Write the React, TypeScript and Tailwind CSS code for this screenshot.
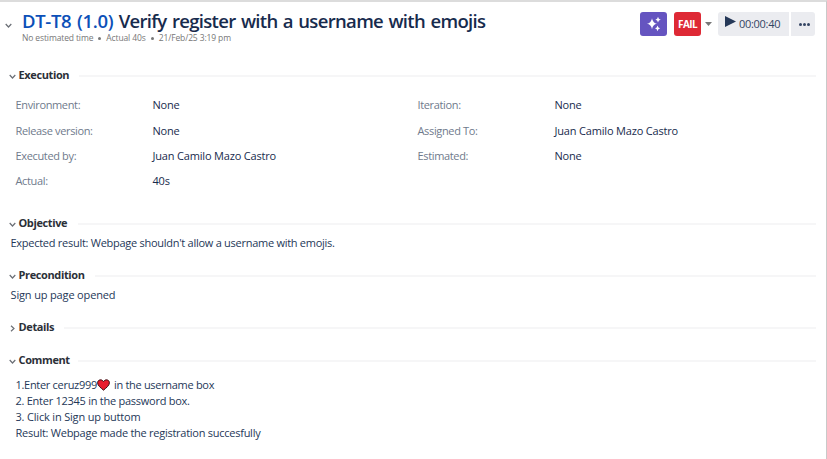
import type { ReactNode } from "react";

function Chevron({ closed = false, className = "" }: { closed?: boolean; className?: string }) {
  return (
    <svg viewBox="0 0 7 7" className={`h-[7px] w-[7px] shrink-0 ${className}`} fill="none" stroke="#6b6f76" strokeWidth="1.2">
      <path d={closed ? "M2 0.7L5 3.5L2 6.3" : "M0.7 2L3.5 5L6.3 2"} />
    </svg>
  );
}

function SectionTitle({ children, width, closed }: { children: ReactNode; width: string; closed?: boolean }) {
  return (
    <div className="flex h-4 items-center">
      <Chevron closed={closed} className="mt-[2px] ml-[8.5px]" />
      <h2 className={`ml-[3px] shrink-0 text-[11px] leading-4 font-bold tracking-[-0.38px] whitespace-nowrap text-[#2b3038] ${width}`}>{children}</h2>
      <div className="mt-[1px] mr-[10px] h-[2px] flex-1 bg-[#f6f6f7]" />
    </div>
  );
}

function Field({ label, value }: { label: string; value: string }) {
  return (
    <div className="flex h-[25.3px] items-center text-[11px]">
      <span className="w-[137px] tracking-[-0.35px] text-[#6f7a8c]">{label}</span>
      <span className="tracking-[-0.18px] text-[#172b4d]">{value}</span>
    </div>
  );
}

export default function App() {
  return (
    <main className="h-[459px] w-[827px] overflow-hidden border-t-2 border-r border-t-[#dcdcdc] border-r-[#c9c9c9] bg-white font-['Open_Sans','Noto_Sans',sans-serif] text-[11px] text-[#253858]">
      <header className="flex h-[65px]">
        <Chevron className="mt-[20px] ml-[5px]" />
        <div className="ml-[10px] flex-1 pt-[8px]">
          <h1 className="text-[18.5px] leading-[22px] font-semibold tracking-[-0.67px] whitespace-nowrap text-[#172b4d] [word-spacing:1.2px]">
            <span className="tracking-[-0.33px] text-[#0c50b8]">DT-T8 (1.0)</span> Verify register with a username with emojis
          </h1>
          <p className="flex items-center text-[8.5px] leading-3 tracking-[-0.12px] whitespace-nowrap text-[#777]">
            No estimated time
            <i className="mx-[5px] h-[3px] w-[3px] rounded-full bg-[#777]" />
            Actual 40s
            <i className="mx-[5px] h-[3px] w-[3px] rounded-full bg-[#777]" />
            21/Feb/25 3:19 pm
          </p>
        </div>
        <div className="mt-[10px] mr-[11px] flex h-6">
          <button className="flex h-6 w-[27px] items-center justify-center rounded-[3px] bg-[#6554c0]">
            <svg viewBox="0 0 16 16" className="h-4 w-4" fill="white">
              <path d="M6 2.3Q6.8 7.2 11 7.8Q6.8 8.5 6 13.2Q5.2 8.5 1 7.8Q5.2 7.2 6 2.3Z" />
              <path d="M12 0.8Q12.4 3.3 14.7 3.7Q12.4 4 12 6.5Q11.6 4 9.4 3.7Q11.6 3.3 12 0.8Z" />
              <path d="M11.5 9.5Q12 12 14.2 12.3Q12 12.7 11.5 15.2Q11.1 12.7 9 12.3Q11.1 12 11.5 9.5Z" />
            </svg>
          </button>
          <button className="ml-[7px] h-6 w-[27px] rounded-[3px] bg-[#de2935] text-[10px] font-bold tracking-[-0.6px] text-white">FAIL</button>
          <svg viewBox="0 0 7 4" className="mt-[10px] ml-[4px] h-1 w-[7px]" fill="#777">
            <path d="M0 0H7L3.5 4Z" />
          </svg>
          <button className="ml-[6px] flex h-6 w-[71px] items-center rounded-l-[3px] bg-[#ebecf0] text-[11px] text-[#344563]">
            <svg viewBox="0 0 11 11" className="mb-[5px] ml-[7px] h-[11px] w-[11px]" fill="#253858">
              <path d="M0 0L11 5.5L0 11Z" />
            </svg>
            <span className="ml-[3px] tracking-[-0.3px]">00:00:40</span>
          </button>
          <button className="ml-[2px] flex h-6 w-6 items-center justify-center gap-[1px] rounded-r-[3px] bg-[#ebecf0] pl-[3px]">
            <i className="h-[3px] w-[3px] rounded-full bg-[#344563]" />
            <i className="h-[3px] w-[3px] rounded-full bg-[#344563]" />
            <i className="h-[3px] w-[3px] rounded-full bg-[#344563]" />
          </button>
        </div>
      </header>

      <section className="h-[148px]">
        <SectionTitle width="w-[60px]">Execution</SectionTitle>
        <div className="flex pt-[10px] pl-[15.5px]">
          <div className="w-[402px]">
            <Field label="Environment:" value="None" />
            <Field label="Release version:" value="None" />
            <Field label="Executed by:" value="Juan Camilo Mazo Castro" />
            <Field label="Actual:" value="40s" />
          </div>
          <div>
            <Field label="Iteration:" value="None" />
            <Field label="Assigned To:" value="Juan Camilo Mazo Castro" />
            <Field label="Estimated:" value="None" />
          </div>
        </div>
      </section>

      <section className="h-[52px]">
        <SectionTitle width="w-[59px]">Objective</SectionTitle>
        <p className="mt-1 pl-[10.5px] leading-4 tracking-[-0.27px]">Expected result: Webpage shouldn't allow a username with emojis.</p>
      </section>
      <section className="h-[52px]">
        <SectionTitle width="w-[76px]">Precondition</SectionTitle>
        <p className="mt-1 pl-[10.5px] leading-4 tracking-[-0.15px]">Sign up page opened</p>
      </section>
      <section className="h-[33px]">
        <SectionTitle width="w-[45px]" closed>Details</SectionTitle>
      </section>
      <section>
        <SectionTitle width="w-[59px]">Comment</SectionTitle>
        <div className="mt-[9px] pl-[15.5px] leading-4 tracking-[-0.26px] whitespace-nowrap">
          <p className="flex h-4 items-center tracking-[-0.3px]">
            1.Enter ceruz999
            <svg viewBox="0 0 13 12" className="mr-[4px] h-3 w-[13px]" fill="#e81c2e" stroke="#3b1015" strokeWidth="1">
              <path d="M6.5 11.2C3.5 8.6 0.6 6.5 0.6 3.8C0.6 0.6 4.7 -0.3 6.5 2.6C8.3 -0.3 12.4 0.6 12.4 3.8C12.4 6.5 9.5 8.6 6.5 11.2Z" />
            </svg>
            in the username box
          </p>
          <p>2. Enter 12345 in the password box.</p>
          <p className="tracking-[-0.18px]">3. Click in Sign up buttom</p>
          <p>Result: Webpage made the registration succesfully</p>
        </div>
      </section>
    </main>
  );
}
